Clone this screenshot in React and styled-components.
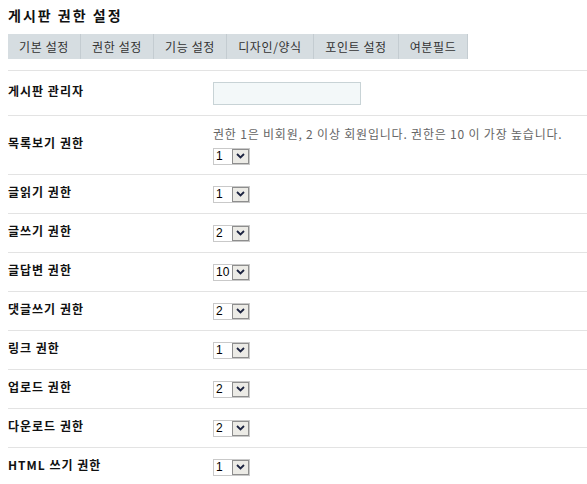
import styled, { createGlobalStyle } from "styled-components";

const GlobalStyle = createGlobalStyle`
  body {
    margin: 0;
    background: #fff;
    font-family: "Noto Sans CJK KR", "Noto Sans", sans-serif;
    color: #222;
  }
`;

const Container = styled.div`
  padding: 0 0 0 8px;
`;
const Title = styled.h1`
  margin: 0 0 10px;
  padding-top: 6px;
  font-size: 14px;
  line-height: 18px;
  font-weight: 700;
  letter-spacing: 2px;
  color: #111;
`;
const TabBar = styled.ul`
  display: flex;
  margin: 0 0 11px;
  padding: 0;
  list-style: none;
`;
const Tab = styled.li`
  width: ${(p) => p.w}px;
  height: 25px;
  box-sizing: border-box;
  display: flex;
  align-items: center;
  justify-content: center;
  background: #d6dde1;
  border-right: 1px solid #c4ccd1;
  font-size: 12px;
  letter-spacing: 0.6px;
  color: #333;
`;
const Row = styled.div`
  display: flex;
  align-items: center;
  box-sizing: border-box;
  height: ${(p) => p.h}px;
  border-top: 1px solid #e3e3e3;
`;
const Label = styled.div`
  width: 205px;
  flex-shrink: 0;
  padding-bottom: 5px;
  font-size: 12px;
  font-weight: 700;
  letter-spacing: 1px;
  color: #111;
`;
const Field = styled.div`
  display: flex;
  flex-direction: column;
  gap: 6px;
`;
const Help = styled.div`
  font-size: 12px;
  line-height: 16px;
  letter-spacing: 0.8px;
  color: #666;
`;
const TextInput = styled.input`
  width: 148px;
  height: 23px;
  box-sizing: border-box;
  border: 1px solid #c8d3d6;
  background: #f3f8f9;
  outline: none;
`;
const Select = styled.div`
  display: flex;
  width: 37px;
  height: 17px;
  box-sizing: border-box;
  border: 1px solid #c9c9c9;
  background: #fff;
`;
const Value = styled.span`
  flex: 1;
  font-size: 12px;
  line-height: 15px;
  padding-left: 2px;
  color: #000;
  font-family: "Liberation Sans", sans-serif;
`;
const Arrow = styled.span`
  width: 17px;
  box-sizing: border-box;
  border: 1px solid #8e8e8e;
  background: #ecebe6;
  display: flex;
  align-items: center;
  justify-content: center;
`;

const tabs = [
  ["기본 설정", 73],
  ["권한 설정", 73],
  ["기능 설정", 73],
  ["디자인/양식", 87],
  ["포인트 설정", 85],
  ["여분필드", 69],
];

const levels = [
  ["글읽기 권한", 1],
  ["글쓰기 권한", 2],
  ["글답변 권한", 10],
  ["댓글쓰기 권한", 2],
  ["링크 권한", 1],
  ["업로드 권한", 2],
  ["다운로드 권한", 2],
  ["HTML 쓰기 권한", 1],
];

const LevelSelect = ({ value }) => (
  <Select>
    <Value>{value}</Value>
    <Arrow>
      <svg width="9" height="6" viewBox="0 0 9 6">
        <path d="M1 1 L4.5 4.5 L8 1" fill="none" stroke="#1c2340" strokeWidth="1.8" />
      </svg>
    </Arrow>
  </Select>
);

const App = () => (
  <Container>
    <GlobalStyle />
    <Title>게시판 권한 설정</Title>
    <TabBar>
      {tabs.map(([t, w]) => (
        <Tab key={t} w={w}>
          {t}
        </Tab>
      ))}
    </TabBar>
    <Row h={45}>
      <Label>게시판 관리자</Label>
      <TextInput />
    </Row>
    <Row h={59}>
      <Label>목록보기 권한</Label>
      <Field>
        <Help>권한 1은 비회원, 2 이상 회원입니다. 권한은 10 이 가장 높습니다.</Help>
        <LevelSelect value={1} />
      </Field>
    </Row>
    {levels.map(([name, v]) => (
      <Row key={name} h={39}>
        <Label>{name}</Label>
        <LevelSelect value={v} />
      </Row>
    ))}
  </Container>
);

export default App;
